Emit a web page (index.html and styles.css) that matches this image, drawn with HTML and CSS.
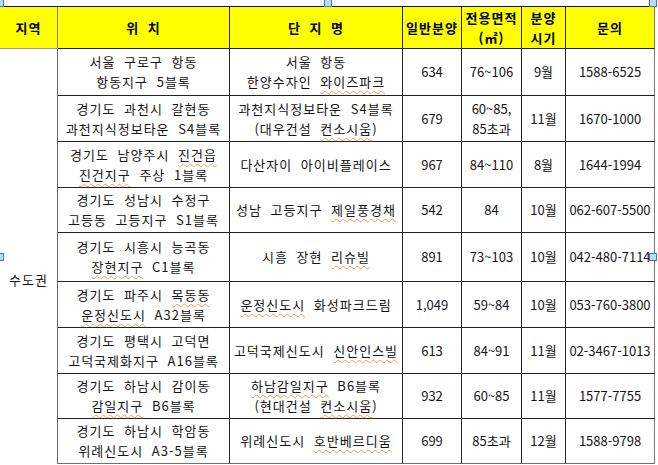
FILE: index.html
```html
<!DOCTYPE html>
<html lang="ko">
<head>
<meta charset="utf-8">
<title>수도권 분양 일정</title>
<link rel="stylesheet" href="styles.css">
</head>
<body>
<div class="frame">
  <table class="sales">
    <thead>
      <tr class="head">
        <th class="c-region">지역</th>
        <th class="c-loc">위 치</th>
        <th class="c-name">단 지 명</th>
        <th class="c-units">일반분양</th>
        <th class="c-area">전용면적<br>(㎡)</th>
        <th class="c-time">분양<br>시기</th>
        <th class="c-tel">문의</th>
      </tr>
    </thead>
    <tbody>
      <tr class="r47">
        <td class="region t" rowspan="9">수도권</td>
        <td class="t">서울 구로구 항동<br>항동지구 5블록</td>
        <td class="t">서울 항동<br>한양수자인 <span class="sp">와이즈파크</span></td>
        <td>634</td><td>76~106</td><td>9월</td><td>1588-6525</td>
      </tr>
      <tr class="r46">
        <td class="t">경기도 과천시 갈현동<br>과천지식정보타운 S4블록</td>
        <td class="t">과천지식정보타운 S4블록<br>(대우건설 <span class="sp">컨소시움</span>)</td>
        <td>679</td><td>60~85,<br>85초과</td><td>11월</td><td>1670-1000</td>
      </tr>
      <tr class="r46">
        <td class="t">경기도 남양주시 <span class="sp">진건읍</span><br><span class="sp">진건지구</span> 주상 1블록</td>
        <td class="t">다산자이 아이비플레이스</td>
        <td>967</td><td>84~110</td><td>8월</td><td>1644-1994</td>
      </tr>
      <tr class="r45">
        <td class="t">경기도 성남시 수정구<br>고등동 고등지구 S1블록</td>
        <td class="t">성남 고등지구 <span class="sp">제일풍경채</span></td>
        <td>542</td><td>84</td><td>10월</td><td>062-607-5500</td>
      </tr>
      <tr class="r49">
        <td class="t">경기도 시흥시 능곡동<br><span class="sp">장현지구</span> C1블록</td>
        <td class="t">시흥 장현 <span class="sp">리슈빌</span></td>
        <td>891</td><td>73~103</td><td>10월</td><td>042-480-7114</td>
      </tr>
      <tr class="r46">
        <td class="t">경기도 파주시 <span class="sp">목동동</span><br><span class="sp">운정신도시</span> A32블록</td>
        <td class="t"><span class="sp">운정신도시</span> 화성파크드림</td>
        <td>1,049</td><td>59~84</td><td>10월</td><td>053-760-3800</td>
      </tr>
      <tr class="r46">
        <td class="t">경기도 평택시 고덕면<br>고덕국제화지구 A16블록</td>
        <td class="t">고덕국제신도시 <span class="sp">신안인스빌</span></td>
        <td>613</td><td>84~91</td><td>11월</td><td>02-3467-1013</td>
      </tr>
      <tr class="r45">
        <td class="t">경기도 하남시 감이동<br><span class="sp">감일지구</span> B6블록</td>
        <td class="t"><span class="sp">하남감일지구</span> B6블록<br>(현대건설 <span class="sp">컨소시움</span>)</td>
        <td>932</td><td>60~85</td><td>11월</td><td>1577-7755</td>
      </tr>
      <tr class="r45 last">
        <td class="t">경기도 하남시 학암동<br>위례신도시 A3-5블록</td>
        <td class="t">위례신도시 <span class="sp">호반베르디움</span></td>
        <td>699</td><td>85초과</td><td>12월</td><td>1588-9798</td>
      </tr>
    </tbody>
  </table>
  <span class="handle h-tl"></span>
  <span class="handle h-tm"></span>
  <span class="handle h-tr"></span>
  <span class="handle h-ml"></span>
  <span class="handle h-mr"></span>
</div>
</body>
</html>
```

FILE: styles.css
```css
* {
  box-sizing: border-box;
}

html,
body {
  margin: 0;
  padding: 0;
  background: #ffffff;
}

body {
  font-family: "Noto Sans CJK KR", "Noto Sans", sans-serif;
  color: #151515;
}

.frame {
  position: relative;
  width: 658px;
  height: 465px;
  padding-top: 6px;
  overflow: hidden;
}

.sales {
  width: 655px;
  table-layout: fixed;
  border-collapse: separate;
  border-spacing: 0;
  border-top: 1px solid #111111;
}

.sales th,
.sales td {
  padding: 0;
  border-right: 1px solid #222222;
  border-bottom: 1px solid #222222;
  text-align: center;
  vertical-align: middle;
  font-size: 13px;
  line-height: 20px;
  word-spacing: 4px;
  white-space: nowrap;
}

.sales td.t {
  letter-spacing: 1px;
  word-spacing: 4px;
}

.sales th {
  background: #ffff00;
  font-weight: 700;
  color: #000000;
  letter-spacing: 1px;
}

.head {
  height: 42px;
}

.r45 { height: 45px; }
.r46 { height: 46px; }
.r47 { height: 47px; }
.r49 { height: 49px; }

.c-region { width: 58px; }
.c-loc { width: 172px; }
.c-name { width: 173px; }
.c-units { width: 59px; }
.c-area { width: 60px; }
.c-time { width: 44px; }
.c-tel { width: 89px; }

.sales th.c-region {
  border-right-color: #808080;
  border-bottom-color: #9a9a9a;
}

.sales td.region {
  border-right-color: #6a6a6a;
  border-bottom: none;
  padding-top: 46px;
}

.sales th.c-tel,
.sales td:last-child {
  border-right-color: #7a7a7a;
}

.last td {
  border-bottom-color: #707070;
}

.sp {
  text-decoration: underline wavy #e8a15a;
  text-decoration-thickness: 1px;
  text-underline-offset: 3px;
  text-decoration-skip-ink: none;
}

.handle {
  position: absolute;
  width: 8px;
  height: 8px;
  background: #b8dcf4;
  border: 1px solid #3f78b4;
}

.h-tl { left: -4px; top: -1px; }
.h-tm { left: 324px; top: -1px; }
.h-tr { left: 649px; top: -1px; }
.h-ml { left: -4px; top: 253px; }
.h-mr { left: 649px; top: 253px; }
```
